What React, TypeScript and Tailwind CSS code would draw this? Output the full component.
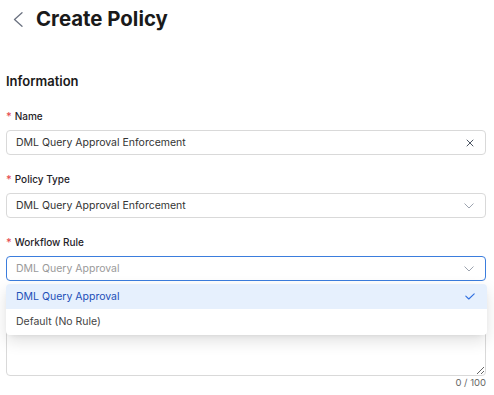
import React from "react";

function Field({ label, children }: { label: string; children: React.ReactNode }) {
  return (
    <div className="flex flex-col">
      <div className="h-[20px] leading-[20px] text-[10px] font-medium text-[#1f2329] flex items-center">
        <span className="text-[#e5484d] mr-[3px] text-[11px]">*</span>
        <span>{label}</span>
      </div>
      <div className="mt-[4px]">{children}</div>
    </div>
  );
}

function ChevronDown({ color = "#9ca3af" }: { color?: string }) {
  return (
    <svg width="10" height="6" viewBox="0 0 10 6" fill="none">
      <path d="M0.8 0.8L5 5L9.2 0.8" stroke={color} strokeWidth="1" strokeLinecap="round" strokeLinejoin="round" />
    </svg>
  );
}

export default function App() {
  return (
    <div className="w-[494px] h-[395px] bg-white overflow-hidden" style={{ fontFamily: "Inter, 'Noto Sans', sans-serif" }}>
      <div className="h-[38px] flex items-center pl-[13px]">
        <svg width="10" height="15" viewBox="0 0 10 15" fill="none">
          <path d="M9 0.8L1.5 7.5L9 14.2" stroke="#6b7280" strokeWidth="1.3" strokeLinecap="round" strokeLinejoin="round" />
        </svg>
        <span className="ml-[13px] text-[20.4px] font-bold text-[#1a1a1a] leading-none">Create Policy</span>
      </div>
      <div className="pl-[6px] pr-[8px]">
        <div className="mt-[33px] h-[20px] leading-[20px] text-[13px] font-semibold text-[#1a1a1a]">Information</div>
        <div className="mt-[15px] flex flex-col gap-[14px]">
          <Field label="Name">
            <div className="h-[25px] border border-[#d9d9d9] rounded-[4px] flex items-center pl-[9px] pr-[11px] text-[10.5px] text-[#333]">
              <span className="flex-1">DML Query Approval Enforcement</span>
              <svg width="8" height="8" viewBox="0 0 8 8" fill="none">
                <path d="M1 1L7 7M7 1L1 7" stroke="#4b5563" strokeWidth="1" strokeLinecap="round" />
              </svg>
            </div>
          </Field>
          <Field label="Policy Type">
            <div className="h-[25px] border border-[#d9d9d9] rounded-[4px] flex items-center pl-[9px] pr-[11px] text-[10.5px] text-[#333]">
              <span className="flex-1">DML Query Approval Enforcement</span>
              <ChevronDown />
            </div>
          </Field>
          <Field label="Workflow Rule">
            <div className="relative">
              <div className="h-[25px] border border-[#3b7ddd] rounded-[4px] flex items-center pl-[9px] pr-[11px] text-[10.5px] text-[#9a9a9a]">
                <span className="flex-1">DML Query Approval</span>
                <ChevronDown />
              </div>
              <div className="absolute left-0 right-[-1px] top-[28px] z-10 bg-white rounded-[4px] shadow-[0_6px_16px_rgba(0,0,0,0.12),0_3px_6px_-4px_rgba(0,0,0,0.12)] overflow-hidden">
                <div className="h-[25px] bg-[#e6f0fd] flex items-center pl-[10px] pr-[12px] text-[10.5px] text-[#1d4fb8]">
                  <span className="flex-1">DML Query Approval</span>
                  <svg width="10" height="7" viewBox="0 0 10 7" fill="none">
                    <path d="M0.8 3.2L3.8 6L9.2 0.8" stroke="#2f6fe0" strokeWidth="1.1" strokeLinecap="round" strokeLinejoin="round" />
                  </svg>
                </div>
                <div className="h-[26px] flex items-center pl-[10px] text-[10.5px] text-[#444]">Default (No Rule)</div>
              </div>
            </div>
          </Field>
          <div className="flex flex-col">
            <div className="h-[20px]" />
            <textarea className="mt-[4px] h-[57px] w-full border border-[#d9d9d9] rounded-[4px] block" />
            <div className="h-[12px] leading-[12px] mt-[1px] text-right text-[9.5px] text-[#666]">0 / 100</div>
          </div>
        </div>
      </div>
    </div>
  );
}
